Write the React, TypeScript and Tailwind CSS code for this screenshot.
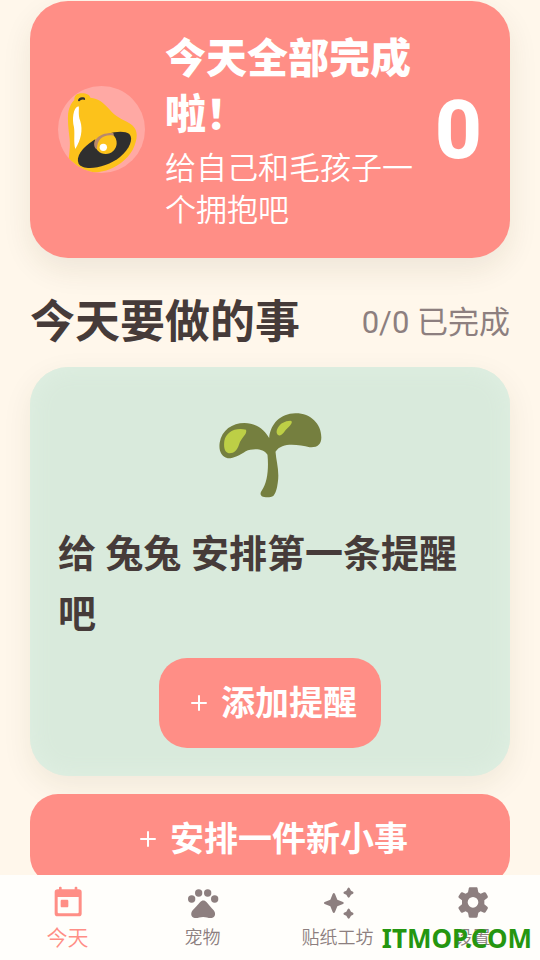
import clsx from 'clsx';

const BellIcon = () => (
  <svg viewBox="21 18 261 261" className="h-full w-full" aria-hidden="true">
    <path
      d="M70 60C69 47 78 40 92 40C108 40 116 45 118 53C142 55 158 68 175 88C195 112 212 117 234 129C257 142 261 162 254 186C246 219 220 247 186 263C160 276 130 279 98 279C68 280 53 262 53 239C55 215 58 200 56 178C53 150 50 130 51 108C52 86 60 70 70 60Z"
      fill="#fcc21b"
    />
    <path d="M81 63C81 53 90 50 97 52C102 53 103 56 102 60C96 56 88 59 85 64Z" fill="#2f2f2f" />
    <path d="M82 79C87 80 79 102 88 124C96 150 90 180 73 207C67 189 72 164 69 142C63 118 66 84 82 79Z" fill="#fff" />
    <path
      d="M83 251C73 231 93 203 129 180C167 157 216 147 235 162C248 176 237 205 207 231C168 263 98 275 83 251Z"
      fill="#2f2f2f"
    />
    <circle cx="164" cy="189" r="33" fill="#fcc21b" />
    <path d="M135 207C127 199 129 186 135 178C146 164 164 158 187 159L189 167C160 161 138 176 138 206Z" fill="#b8896c" />
    <circle cx="157" cy="202" r="11" fill="#fff" />
  </svg>
);

const SproutIcon = () => (
  <svg viewBox="56 38 308 254" className="h-[85px] w-[103px]" aria-hidden="true">
    <path
      d="M206 113C210 70 240 40 284 39C329 38 362 70 362 111C362 132 349 142 327 140C294 134 245 123 225 154C227 183 237 210 232 244C230 261 226 277 219 285C210 292 193 291 184 287C178 281 180 276 184 270C201 245 205 203 201 163C190 143 157 143 136 152C117 164 99 174 82 173C61 169 55 148 58 127C64 89 96 68 132 68C169 69 193 89 206 113Z"
      fill="#757f3f"
    />
    <path d="M137 88C141 103 122 111 116 132C110 150 101 159 85 158C71 155 70 137 72 121C77 95 105 80 137 88Z" fill="#bdcf46" />
    <path d="M269 61C280 62 270 76 259 85C250 94 245 106 236 105C226 102 227 91 232 82C240 68 253 62 269 61Z" fill="#bdcf46" />
  </svg>
);

const PlusIcon = () => (
  <svg viewBox="0 0 32 32" className="h-8 w-8" aria-hidden="true">
    <path d="M16 9V23M9 16H23" stroke="currentColor" strokeWidth="2" strokeLinecap="round" />
  </svg>
);

const TodayIcon = () => (
  <path
    fillRule="evenodd"
    d="M40 28V23C40 19 48 19 48 23V28H87V23C87 19 95 19 95 23V28H99C105 28 108 31 108 36V101C108 106 105 109 99 109H36C30 109 27 106 27 101V36C27 31 30 28 36 28ZM36 51V97C36 99 37 100 39 100H96C98 100 99 99 99 97V51ZM49 59H64C67 59 68 61 68 63V78C68 80 67 82 64 82H49C46 82 45 80 45 78V63C45 61 46 59 49 59Z"
  />
);

const PawIcon = () => (
  <>
    <circle cx="33" cy="57" r="11" />
    <circle cx="54" cy="39" r="11" />
    <circle cx="81" cy="39" r="11" />
    <circle cx="102" cy="57" r="11" />
    <path d="M58 67C64 60 72 60 78 67C85 76 91 82 99 91C105 98 106 112 93 114C84 115 77 111 67.500 111C58 111 51 115 42 114C29 112 30 98 36 91C44 82 51 76 58 67Z" />
  </>
);

const SparklesIcon = () => (
  <>
    <path d="M51 42C53 38 56 38 58 42L65 59L82 66C85 68 85 70 82 72L65 79L58 96C56 100 53 100 51 96L44 79L27 72C24 70 24 68 27 66L44 59Z" />
    <path d="M96 25C98 22 100 22 102 25L106 32L112 35C114 37 114 39 112 41L106 44L102 51C100 54 98 54 96 51L92 44L85 41C83 39 83 37 85 35L92 32Z" />
    <path d="M96 88C98 85 100 85 102 88L106 95L112 98C114 100 114 102 112 104L106 107L102 114C100 117 98 117 96 114L92 107L85 104C83 102 83 100 85 98L92 95Z" />
  </>
);

const GearIcon = () => (
  <path
    fillRule="evenodd"
    d="M58 22H77C80 22 81 24 81 27L83 37L90 41L100 37C103 36 105 37 106 39L111 48C112 51 112 52 110 54L101 61V73L110 80C112 82 112 84 111 86L105 96C104 98 102 99 100 98L90 94L83 98L81 108C81 111 79 113 77 113H58C55 113 54 111 54 108L52 98L45 94L35 98C33 99 31 98 30 96L24 86C23 84 23 82 25 80L34 73V61L25 54C23 52 23 50 24 48L30 39C31 37 33 36 35 37L45 41L52 37L54 27C54 24 56 22 58 22ZM67 51A16 16 0 1 0 67 83A16 16 0 1 0 67 51Z"
  />
);

const tabs = [
  { label: '今天', Icon: TodayIcon, active: true },
  { label: '宠物', Icon: PawIcon },
  { label: '贴纸工坊', Icon: SparklesIcon },
  { label: '设置', Icon: GearIcon },
];

const AddButton = ({ label, classes = '' }: any) => (
  <button
    type="button"
    className={clsx(
      'flex h-[90px] shrink-0 items-center justify-center gap-1.5 rounded-[28px] bg-[#ff8e86] text-[34px] leading-none font-bold text-white',
      classes,
    )}
  >
    <PlusIcon />
    {label}
  </button>
);

const SummaryCard = () => (
  <section className="flex shrink-0 items-center rounded-[38px] bg-[#ff8e86] px-7 py-[26px] text-white shadow-[0_12px_30px_rgba(70,60,20,0.09)]">
    <div className="h-[87px] w-[87px] shrink-0 overflow-hidden rounded-full bg-[#ffa9a4]">
      <BellIcon />
    </div>
    <div className="ml-5 min-w-0 flex-1 pt-1">
      <h1 className="text-[41px] leading-14 font-black">今天全部完成啦！</h1>
      <p className="mt-[5px] text-[31px] leading-[42px] font-[350]">给自己和毛孩子一个拥抱吧</p>
    </div>
    <strong className="ml-4 text-[82px] leading-none font-extrabold">0</strong>
  </section>
);

const TabBar = () => (
  <nav className="relative grid h-[85px] shrink-0 grid-cols-4 bg-[#fffefb]">
    {tabs.map(({ label, Icon, active }) => (
      <a
        key={label}
        href="#"
        className={clsx(
          'flex flex-col items-center pt-[9px] font-[350] whitespace-nowrap',
          active ? 'text-[21px] text-[#ff8e86]' : 'text-[18px] text-[#8d7f7f]',
        )}
      >
        <svg viewBox="13 12 108 108" className="h-9 w-9 shrink-0" fill="currentColor" aria-hidden="true">
          <Icon />
        </svg>
        <span className="leading-9">{label}</span>
      </a>
    ))}
    <span className="absolute right-2 bottom-1 font-['Noto_Sans'] text-[26px] leading-9 font-bold text-[#259610]">
      ITMOP.COM
    </span>
  </nav>
);

const App = () => {
  return (
    <div className="flex h-screen flex-col bg-[#fff7eb] font-['Roboto','Noto_Sans_CJK_SC',sans-serif] text-[#463b39]">
      <main className="flex min-h-0 flex-1 flex-col overflow-hidden px-[30px] pt-px">
        <SummaryCard />
        <header className="flex shrink-0 items-center justify-between pt-8 pb-[11px]">
          <h2 className="text-[45px] leading-[66px] font-bold">今天要做的事</h2>
          <span className="text-[31px] font-normal text-[#8d7f7f]">0/0 已完成</span>
        </header>
        <section className="flex shrink-0 flex-col items-center rounded-[38px] bg-[#d9eadc] px-7 pt-[46px] pb-7 shadow-[0_10px_30px_rgba(70,60,20,0.08),inset_0_0_24px_#e0f0e3]">
          <SproutIcon />
          <p className="mt-[26px] w-full text-[38px] leading-[60px] font-bold">给 兔兔 安排第一条提醒吧</p>
          <AddButton label="添加提醒" classes="mt-3.5 px-6" />
        </section>
        <AddButton label="安排一件新小事" classes="mt-[18px] w-full" />
      </main>
      <TabBar />
    </div>
  );
};

export default App;
